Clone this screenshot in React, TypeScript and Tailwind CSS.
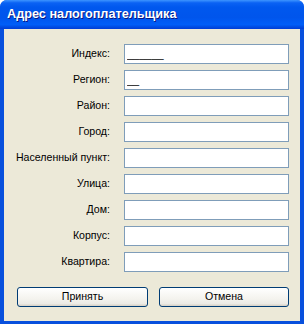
import { useState } from 'react';

const fields = [
    { label: 'Индекс:', value: '______' },
    { label: 'Регион:', value: '__' },
    { label: 'Район:', value: '' },
    { label: 'Город:', value: '' },
    { label: 'Населенный пункт:', value: '' },
    { label: 'Улица:', value: '' },
    { label: 'Дом:', value: '' },
    { label: 'Корпус:', value: '' },
    { label: 'Квартира:', value: '' },
];

export default function App() {
    const [values, setValues] = useState<string[]>(fields.map(f => f.value));

    return (
        <div className="w-[304px] h-[324px] bg-white font-['Liberation_Sans',Arial,sans-serif]">
            <div className="w-full h-full flex flex-col rounded-t-[7px] bg-[#0850dd] overflow-hidden">
                {/* title bar */}
                <div className="h-[29px] shrink-0 flex items-center px-[7px] pt-[1px] bg-[linear-gradient(180deg,#3d95ff_0%,#0a62f4_10%,#0058ee_25%,#0055ec_60%,#005ef8_85%,#004ce2_93%,#003dd7_100%)]">
                    <span className="text-white font-bold text-[12.7px] [text-shadow:1px_1px_#0a1883]">
                        Адрес налогоплательщика
                    </span>
                </div>

                {/* client area */}
                <div className="flex-1 mx-[4px] mb-[3px] bg-[#ece9d8] pt-[15px]">
                    <div className="grid grid-cols-[106px_165px] gap-x-[14px] gap-y-[6px]">
                        {fields.map((f, i) => (
                            <div key={f.label} className="contents">
                                <label className="h-[20px] flex items-center justify-end text-[10.6px] text-black">
                                    {f.label}
                                </label>
                                <input
                                    value={values[i]}
                                    onChange={e => setValues(prev => prev.map((v, j) => (j === i ? e.target.value : v)))}
                                    className="h-[20px] w-[165px] border border-[#7f9db9] bg-white px-[2px] text-[11px] text-black outline-none"
                                />
                            </div>
                        ))}
                    </div>

                    <div className="mt-[15px] ml-[13px] flex gap-[11px]">
                        <button className="w-[131px] h-[20px] border border-[#003c74] rounded-[3px] bg-[linear-gradient(180deg,#ffffff,#f4f3ee_60%,#ecebe6_86%,#d6d0c5)] text-[10.6px] text-black">
                            Принять
                        </button>
                        <button className="w-[130px] h-[20px] border border-[#003c74] rounded-[3px] bg-[linear-gradient(180deg,#ffffff,#f4f3ee_60%,#ecebe6_86%,#d6d0c5)] text-[10.6px] text-black">
                            Отмена
                        </button>
                    </div>
                </div>
            </div>
        </div>
    );
}
